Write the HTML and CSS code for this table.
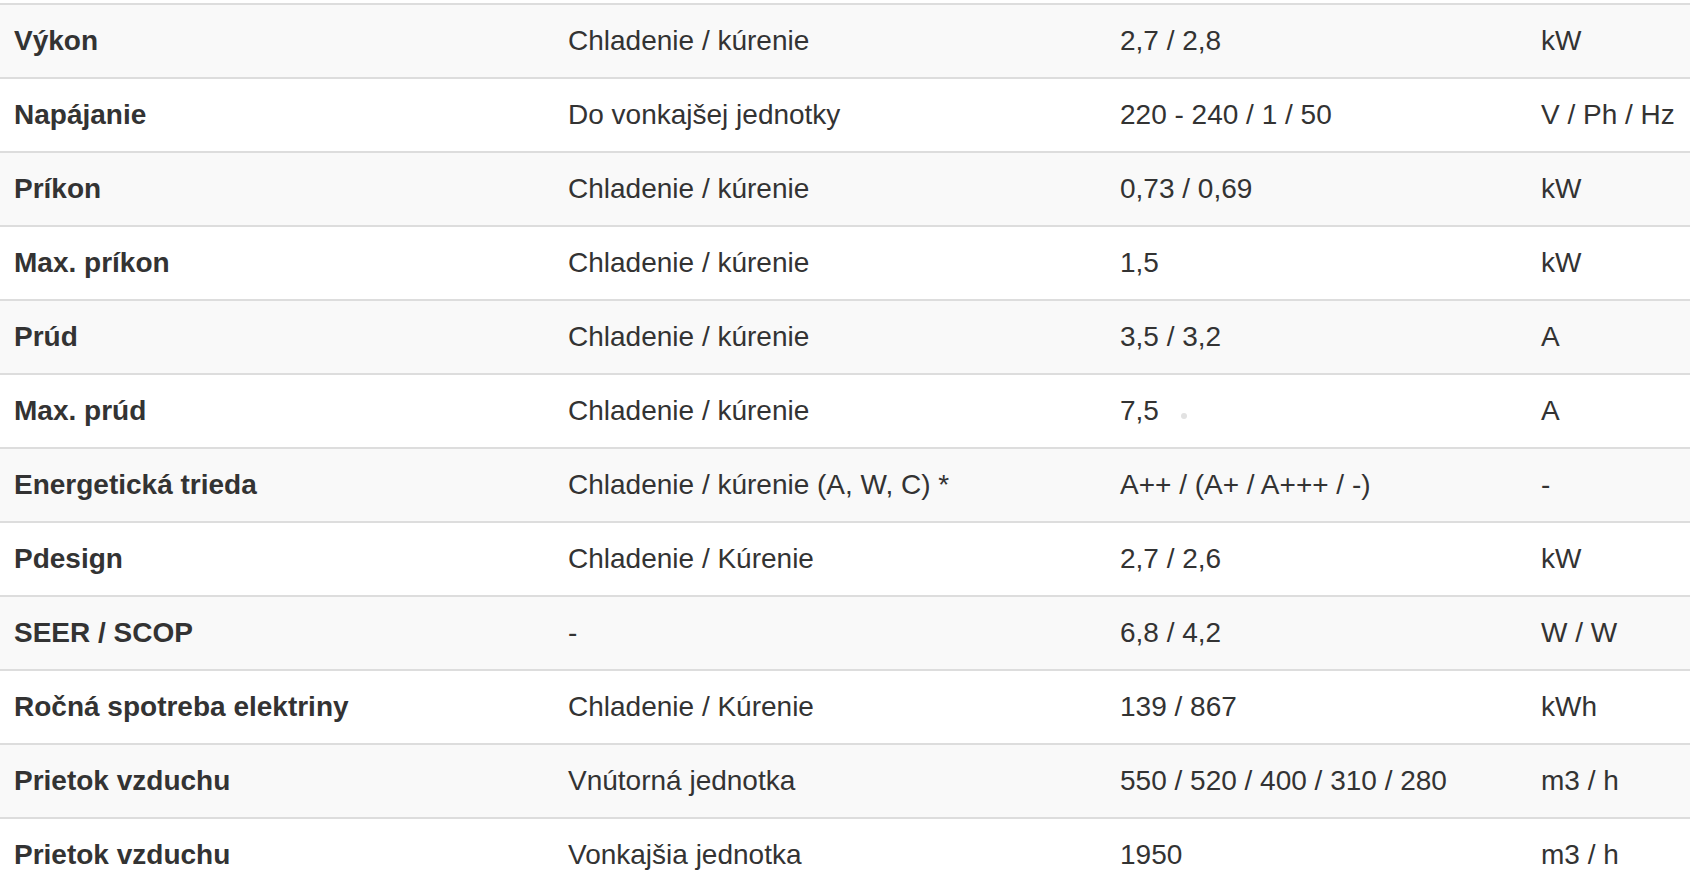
FILE: index.html
```html
<!DOCTYPE html>
<html lang="sk">
<head>
<meta charset="utf-8">
<title>Parametre</title>
<link rel="stylesheet" href="styles.css">
</head>
<body>
<table class="specs">
  <colgroup>
    <col class="c1"><col class="c2"><col class="c3"><col class="c4">
  </colgroup>
  <tbody>
    <tr><td>Výkon</td><td>Chladenie / kúrenie</td><td>2,7 / 2,8</td><td>kW</td></tr>
    <tr><td>Napájanie</td><td>Do vonkajšej jednotky</td><td>220 - 240 / 1 / 50</td><td>V / Ph / Hz</td></tr>
    <tr><td>Príkon</td><td>Chladenie / kúrenie</td><td>0,73 / 0,69</td><td>kW</td></tr>
    <tr><td>Max. príkon</td><td>Chladenie / kúrenie</td><td>1,5</td><td>kW</td></tr>
    <tr><td>Prúd</td><td>Chladenie / kúrenie</td><td>3,5 / 3,2</td><td>A</td></tr>
    <tr><td>Max. prúd</td><td>Chladenie / kúrenie</td><td>7,5<span class="dot"></span></td><td>A</td></tr>
    <tr><td>Energetická trieda</td><td>Chladenie / kúrenie (A, W, C) *</td><td>A++ / (A+ / A+++ / -)</td><td>-</td></tr>
    <tr><td>Pdesign</td><td>Chladenie / Kúrenie</td><td>2,7 / 2,6</td><td>kW</td></tr>
    <tr><td>SEER / SCOP</td><td>-</td><td>6,8 / 4,2</td><td>W / W</td></tr>
    <tr><td>Ročná spotreba elektriny</td><td>Chladenie / Kúrenie</td><td>139 / 867</td><td>kWh</td></tr>
    <tr><td>Prietok vzduchu</td><td>Vnútorná jednotka</td><td>550 / 520 / 400 / 310 / 280</td><td>m3 / h</td></tr>
    <tr><td>Prietok vzduchu</td><td>Vonkajšia jednotka</td><td>1950</td><td>m3 / h</td></tr>
  </tbody>
</table>
</body>
</html>
```
FILE: styles.css
```css
html, body {
  margin: 0;
  padding: 0;
  background: #ffffff;
}

body {
  font-family: "Liberation Sans", Arial, Helvetica, sans-serif;
  font-size: 28px;
  line-height: 40px;
  color: #333333;
  padding-top: 3px;
  overflow: hidden;
}

.specs {
  width: 1690px;
  border-collapse: collapse;
  border-spacing: 0;
  table-layout: fixed;
}

.c1 { width: 552px; }
.c2 { width: 552px; }
.c3 { width: 421px; }
.c4 { width: 165px; }

.specs td {
  padding: 16px;
  border-top: 2px solid #dddddd;
  vertical-align: top;
  white-space: nowrap;
}

.specs td:first-child {
  font-weight: bold;
  padding-left: 14px;
}

.specs tr:nth-child(odd) td {
  background: #f9f9f9;
}

.dot {
  display: inline-block;
  width: 6px;
  height: 6px;
  margin-left: 22px;
  border-radius: 50%;
  background: #e2e2e2;
  vertical-align: 1px;
}
```
